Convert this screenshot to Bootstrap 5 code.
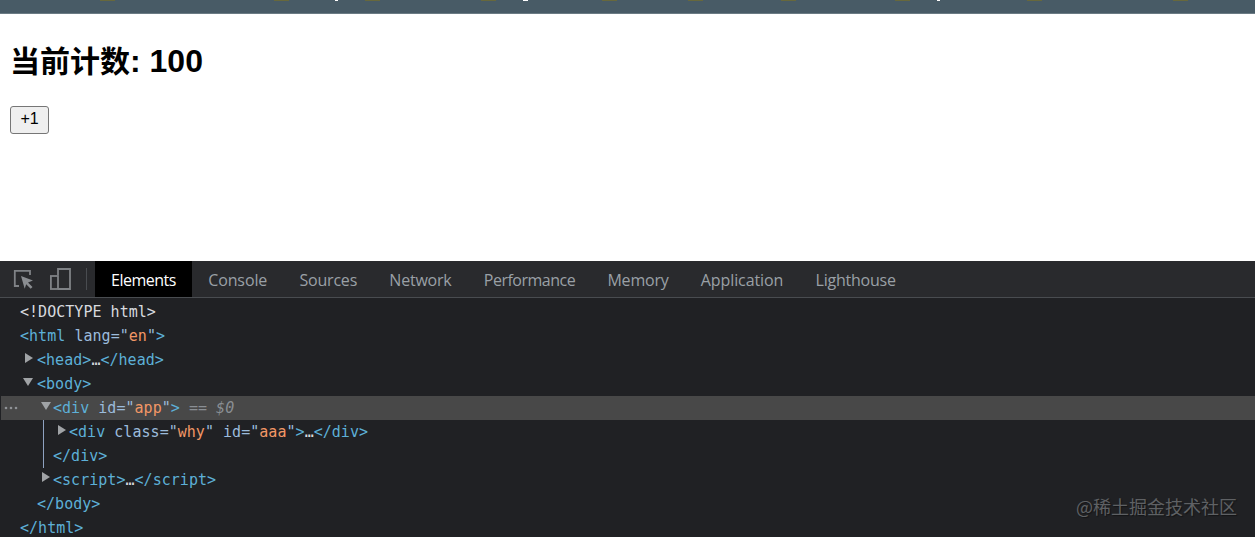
<!DOCTYPE html>
<html lang="zh">
<head>
<meta charset="utf-8">
<title>Counter</title>
<link href="https://cdn.jsdelivr.net/npm/bootstrap@5.3.0/dist/css/bootstrap.min.css" rel="stylesheet">
<style>
html,body{height:537px;overflow:hidden;background:#fff}
.top-strip{height:14px;background:#485b66;border-bottom:1px solid #6b7b84;flex:none}
.top-strip svg{display:block}
.app-pane{height:247px;padding:27px 10px 0;flex:none}
.app-title{font-family:"Liberation Sans","Noto Sans CJK SC",sans-serif;font-size:32px;font-weight:700;line-height:37px;margin:0 0 26px;color:#000}
.cjk-part{font-size:30px;font-family:"Noto Sans CJK SC",sans-serif}
.plain-btn{font-family:"Liberation Sans",sans-serif;font-size:16px;line-height:18px;height:28px;width:39px;padding:0 0 2px;background:#efefef;border:1px solid #767676;border-radius:3px;color:#000}
.devtools{background:#202124;flex:1 1 auto;position:relative;overflow:hidden}
.dt-bar{height:37px;background:#292a2d;border-bottom:1px solid #494c50}
.dt-icon{margin-left:13px;display:block}
.dt-icon2{margin-left:16px;display:block}
.dt-sep{width:1px;height:22px;background:#494c50;margin:0 8px 0 15px}
.dt-tab{font-family:"Open Sans","Noto Sans",sans-serif;font-size:16px;letter-spacing:-.22px;color:#9aa0a6;padding:0 16.3px 0 16px;line-height:38px;height:36px}
.dt-tab.tight{letter-spacing:-.5px}
.dt-tab.loose{letter-spacing:-.1px}
.dt-tab.on{background:#000;color:#fff}
.dt-tree{font-family:"DejaVu Sans Mono",monospace;font-size:15px;letter-spacing:.03px;line-height:24px;color:#d7dadf;padding-top:2px}
.dt-row{height:24px;position:relative;padding-left:20px;white-space:pre}
.dt-row.ind1{padding-left:37px}
.dt-row.ind2{padding-left:53px}
.dt-row.ind3{padding-left:69px}
.dt-row.sel{background:#484848;margin-left:1px;padding-left:52px}
.t{color:#5db0d7}.a{color:#9bbbdc}.v{color:#f29766}.q{color:#9bbbdc}.d{color:#d7dadf}.m{color:#8a8f94;font-style:italic}
.tri{position:absolute;width:0;height:0}
.tri.r{border-left:8px solid #a0a3a6;border-top:5px solid transparent;border-bottom:5px solid transparent;top:5px}
.tri.dn{border-top:8px solid #a0a3a6;border-left:5px solid transparent;border-right:5px solid transparent;top:6px}
.tri.r.up{top:4px}
.pos-25{left:25px}.pos-23{left:23px}.pos-40{left:40px}.pos-58{left:58px}.pos-42{left:42px}
.dots{position:absolute;left:3px;top:10px;display:block}
.guide{position:absolute;left:43px;top:0;bottom:0;width:1px;background:#8ea2c0}
.wmark{position:absolute;right:18px;bottom:20px;font-family:"Noto Sans CJK SC",sans-serif;font-size:18px;line-height:22px;color:#5f6164;text-shadow:1px 1px 1px rgba(0,0,0,.4)}
</style>
</head>
<body class="d-flex flex-column">
<div class="top-strip">
<svg width="1255" height="13" viewBox="0 0 1255 13" aria-hidden="true"><g fill="#67683c"><rect x="100" y="0" width="15" height="1"/><rect x="274" y="0" width="15" height="1"/><rect x="365" y="0" width="15" height="1"/><rect x="481" y="0" width="15" height="1"/><rect x="602" y="0" width="15" height="1"/><rect x="688" y="0" width="15" height="1"/><rect x="781" y="0" width="15" height="1"/><rect x="895" y="0" width="15" height="1"/><rect x="1027" y="0" width="15" height="1"/><rect x="1173" y="0" width="15" height="1"/></g><g fill="#fff"><rect x="335" y="0" width="3" height="1"/><rect x="523" y="0" width="5" height="1"/><rect x="937" y="0" width="3" height="1"/></g></svg>
</div>
<div class="app-pane">
<h2 class="app-title"><span class="cjk-part">当前计数</span>: 100</h2>
<button type="button" class="plain-btn">+1</button>
</div>
<div class="devtools">
<div class="dt-bar d-flex align-items-center">
<svg class="dt-icon" width="20" height="20" viewBox="0 0 20 20" fill="none"><path d="M6 17H1.800V1.800H17V6" stroke="#7f8286" stroke-width="1.800"/><path d="M8 7l12 4.500-5 2 4.500 4.500-1.800 1.800-4.500-4.500-1.500 4.500z" fill="#8a8d91"/></svg>
<svg class="dt-icon2" width="22" height="22" viewBox="0 0 22 22" fill="none"><path d="M9 7V1h12v20H9" stroke="#7f8286" stroke-width="1.800"/><rect x="1.900" y="8" width="7.100" height="13" stroke="#7f8286" stroke-width="1.800"/></svg>
<div class="dt-sep"></div>
<div class="dt-tab on tight">Elements</div>
<div class="dt-tab loose">Console</div>
<div class="dt-tab">Sources</div>
<div class="dt-tab">Network</div>
<div class="dt-tab tight">Performance</div>
<div class="dt-tab">Memory</div>
<div class="dt-tab loose">Application</div>
<div class="dt-tab">Lighthouse</div>
</div>
<div class="dt-tree">
<div class="dt-row"><span class="d">&lt;!DOCTYPE html&gt;</span></div>
<div class="dt-row"><span class="t">&lt;html</span> <span class="a">lang</span><span class="q">="</span><span class="v">en</span><span class="q">"</span><span class="t">&gt;</span></div>
<div class="dt-row ind1"><i class="tri r pos-25"></i><span class="t">&lt;head&gt;</span><span class="d">…</span><span class="t">&lt;/head&gt;</span></div>
<div class="dt-row ind1"><i class="tri dn pos-23"></i><span class="t">&lt;body&gt;</span></div>
<div class="dt-row sel"><svg class="dots" width="18" height="4" viewBox="0 0 18 4" aria-hidden="true"><g fill="#8f9296"><circle cx="2" cy="2" r="1.300"/><circle cx="7" cy="2" r="1.300"/><circle cx="12" cy="2" r="1.300"/></g></svg><i class="tri dn pos-40"></i><span class="t">&lt;div</span> <span class="a">id</span><span class="q">="</span><span class="v">app</span><span class="q">"</span><span class="t">&gt;</span> <span class="m">== $0</span></div>
<div class="dt-row ind3"><i class="guide"></i><i class="tri r pos-58"></i><span class="t">&lt;div</span> <span class="a">class</span><span class="q">="</span><span class="v">why</span><span class="q">"</span> <span class="a">id</span><span class="q">="</span><span class="v">aaa</span><span class="q">"</span><span class="t">&gt;</span><span class="d">…</span><span class="t">&lt;/div&gt;</span></div>
<div class="dt-row ind2"><i class="guide"></i><span class="t">&lt;/div&gt;</span></div>
<div class="dt-row ind2"><i class="tri r up pos-42"></i><span class="t">&lt;script&gt;</span><span class="d">…</span><span class="t">&lt;/script&gt;</span></div>
<div class="dt-row ind1"><span class="t">&lt;/body&gt;</span></div>
<div class="dt-row"><span class="t">&lt;/html&gt;</span></div>
</div>
<div class="wmark">@稀土掘金技术社区</div>
</div>
<script src="https://cdn.jsdelivr.net/npm/bootstrap@5.3.0/dist/js/bootstrap.bundle.min.js"></script>
</body>
</html>
